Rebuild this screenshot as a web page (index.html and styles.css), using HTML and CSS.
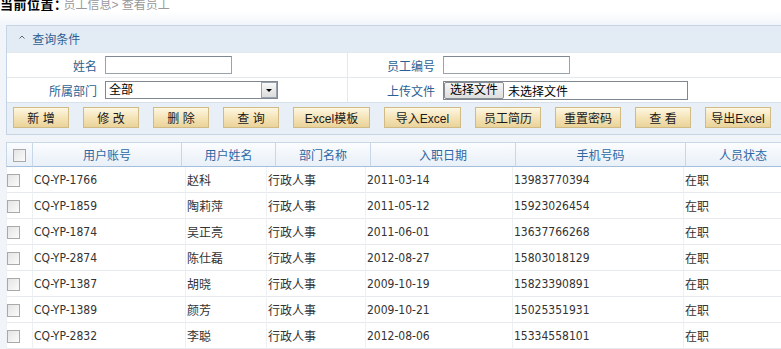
FILE: index.html
```html
<!DOCTYPE html>
<html lang="zh-CN">
<head>
  <meta charset="UTF-8" />
  <title>查看员工</title>
  <link rel="stylesheet" href="styles.css">
</head>
<body>
  <div class="crumb"><b>当前位置：</b><span class="path">员工信息&gt; 查看员工</span></div>

  <div class="panel">
    <div class="panel-head">
      <svg class="caret" width="6" height="4" viewBox="0 0 6 4"><path d="M0.5 3.5 L3 1 L5.5 3.5" fill="none" stroke="#666" stroke-width="1"/></svg>
      查询条件
    </div>
    <div class="form">
      <div class="lbl">姓名</div>
      <div class="val"><span class="txt"></span></div>
      <div class="lbl">员工编号</div>
      <div class="val last"><span class="txt"></span></div>

      <div class="lbl">所属部门</div>
      <div class="val">
        <span class="sel">全部<i class="arrow"></i></span>
      </div>
      <div class="lbl">上传文件</div>
      <div class="val last">
        <span class="file"><span class="file-btn">选择文件</span>未选择文件</span>
      </div>
    </div>
    <div class="tools">
      <button class="btn bs">新 增</button>
      <button class="btn bs">修 改</button>
      <button class="btn bs">删 除</button>
      <button class="btn bs">查 询</button>
      <button class="btn bl">Excel模板</button>
      <button class="btn bl">导入Excel</button>
      <button class="btn bm">员工简历</button>
      <button class="btn bm">重置密码</button>
      <button class="btn bs">查 看</button>
      <button class="btn bm">导出Excel</button>
    </div>
  </div>

  <!-- header and body are separate tables, like the grid plugin renders them -->
  <table class="grid-head">
    <colgroup>
      <col class="h0"><col class="h1"><col class="h2"><col class="h3"><col class="h4"><col class="h5"><col class="h6">
    </colgroup>
    <tr>
      <th><span class="chk"></span></th>
      <th>用户账号</th>
      <th>用户姓名</th>
      <th>部门名称</th>
      <th>入职日期</th>
      <th>手机号码</th>
      <th>人员状态</th>
    </tr>
  </table>

  <table class="grid-body">
    <colgroup>
      <col class="d0"><col class="d1"><col class="d2"><col class="d3"><col class="d4"><col class="d5"><col class="d6">
    </colgroup>
    <tr><td><span class="chk"></span></td><td>CQ-YP-1766</td><td>赵科</td><td>行政人事</td><td>2011-03-14</td><td>13983770394</td><td>在职</td></tr>
    <tr><td><span class="chk"></span></td><td>CQ-YP-1859</td><td>陶莉萍</td><td>行政人事</td><td>2011-05-12</td><td>15923026454</td><td>在职</td></tr>
    <tr><td><span class="chk"></span></td><td>CQ-YP-1874</td><td>吴正亮</td><td>行政人事</td><td>2011-06-01</td><td>13637766268</td><td>在职</td></tr>
    <tr><td><span class="chk"></span></td><td>CQ-YP-2874</td><td>陈仕磊</td><td>行政人事</td><td>2012-08-27</td><td>15803018129</td><td>在职</td></tr>
    <tr><td><span class="chk"></span></td><td>CQ-YP-1387</td><td>胡晓</td><td>行政人事</td><td>2009-10-19</td><td>15823390891</td><td>在职</td></tr>
    <tr><td><span class="chk"></span></td><td>CQ-YP-1389</td><td>颜芳</td><td>行政人事</td><td>2009-10-21</td><td>15025351931</td><td>在职</td></tr>
    <tr><td><span class="chk"></span></td><td>CQ-YP-2832</td><td>李聪</td><td>行政人事</td><td>2012-08-06</td><td>15334558101</td><td>在职</td></tr>
  </table>
</body>
</html>
```

FILE: styles.css
```css
body {
  margin: 0;
  width: 781px;
  height: 349px;
  overflow: hidden;
  background: #f1f5fa;
  font-family: 'Liberation Sans', 'Noto Sans CJK SC', sans-serif;
  font-size: 12px;
  color: #333;
}

.crumb {
  height: 26px;
  margin-top: -1px;
  line-height: 12px;
  color: #999;
  background: linear-gradient(#fff 50%, #f1f5fa);
  white-space: nowrap;
}

.crumb b {
  color: #000;
  font-size: 13px;
  letter-spacing: 0.5px;
}

.path {
  margin-left: -4px;
}

.panel {
  margin-left: 6px;
  border: 1px solid #c4d4e4;
  border-right: none;
  background: #e8eff7;
}

.panel-head {
  height: 26px;
  line-height: 28px;
  padding-left: 12px;
  color: #2d5f93;
  background: #e3ebf4;
}

.caret {
  margin-right: 4px;
  vertical-align: 5px;
}

.form {
  display: grid;
  grid-template-columns: 94px 247px 91px 1fr;
  background: #fff;
}

.lbl,
.val {
  height: 24px;
  border-top: 1px solid #e4e9ee;
  display: flex;
  align-items: center;
}

.lbl {
  justify-content: flex-end;
  padding-right: 4px;
  color: #2d5f93;
}

.val {
  padding-left: 4px;
  border-right: 1px solid #e4e9ee;
}

.val.last {
  border-right: none;
}

.txt {
  display: inline-block;
  width: 125px;
  height: 16px;
  border: 1px solid #9aa3ad;
  border-top-color: #7f8891;
  background: #fff;
}

.sel {
  position: relative;
  display: inline-block;
  width: 168px;
  height: 16px;
  line-height: 16px;
  padding-left: 3px;
  border: 1px solid #7f8891;
  color: #000;
}

.arrow {
  position: absolute;
  right: 0;
  top: 0;
  width: 14px;
  height: 14px;
  border: 1px solid #9aa3ad;
  background: linear-gradient(#f8f8f8, #dcdcdc);
}

.arrow::after {
  content: "";
  position: absolute;
  left: 4px;
  top: 6px;
  border-left: 3px solid transparent;
  border-right: 3px solid transparent;
  border-top: 3px solid #000;
}

.file {
  display: inline-flex;
  align-items: center;
  width: 243px;
  height: 17px;
  border: 1px solid #7f8891;
  color: #000;
}

.file-btn {
  height: 15px;
  line-height: 15px;
  padding: 0 5px;
  margin-right: 4px;
  border: 1px solid #8a8f96;
  border-radius: 2px;
  background: linear-gradient(#f6f6f6, #dedede);
}

.tools {
  display: flex;
  gap: 14px;
  padding: 4px 0 6px 6px;
  border-top: 1px solid #d6e1ec;
}

.btn {
  height: 21px;
  padding: 0;
  border: 1px solid #d0bb86;
  background: linear-gradient(#fdf6e2, #f5e4b8 50%, #ead39a);
  font-family: 'Liberation Sans', 'Noto Sans CJK SC', sans-serif;
  font-size: 12px;
  color: #1a1a1a;
}

.bs { width: 56px; }
.bm { width: 66px; }
.bl { width: 77px; }

.grid-head,
.grid-body {
  margin-left: 6px;
  width: 794px;
  table-layout: fixed;
  border-collapse: separate;
  border-spacing: 0;
  background: #fff;
}

.grid-head {
  margin-top: 7px;
}

.grid-head th {
  height: 23px;
  padding: 0;
  font-weight: normal;
  color: #2e68a3;
  background: linear-gradient(#fbfcfe, #e9f0f8);
  border-top: 1px solid #c7d7e8;
  border-left: 1px solid #c7d7e8;
  border-bottom: 1px solid #a4bfdc;
}

.h0 { width: 26px; }
.h1 { width: 149px; }
.h2 { width: 94px; }
.h3 { width: 95px; }
.h4 { width: 145px; }
.h5 { width: 170px; }
.h6 { width: 115px; }

.grid-body td {
  height: 25px;
  padding: 0 0 0 1px;
  border-bottom: 1px solid #e6eaee;
  border-left: 1px solid #eef1f4;
  white-space: nowrap;
  overflow: hidden;
  font-family: 'DejaVu Sans Condensed', 'Liberation Sans', 'Noto Sans CJK SC', sans-serif;
}

.grid-body td:first-child {
  padding-left: 0;
}

.d0 { width: 26px; }
.d1 { width: 153px; }
.d2 { width: 81px; }
.d3 { width: 99px; }
.d4 { width: 147px; }
.d5 { width: 171px; }
.d6 { width: 117px; }

.chk {
  display: inline-block;
  width: 11px;
  height: 11px;
  vertical-align: middle;
  border: 1px solid #a9a9a9;
  background: linear-gradient(135deg, #e4e4e4, #fbfbfb);
}
```
